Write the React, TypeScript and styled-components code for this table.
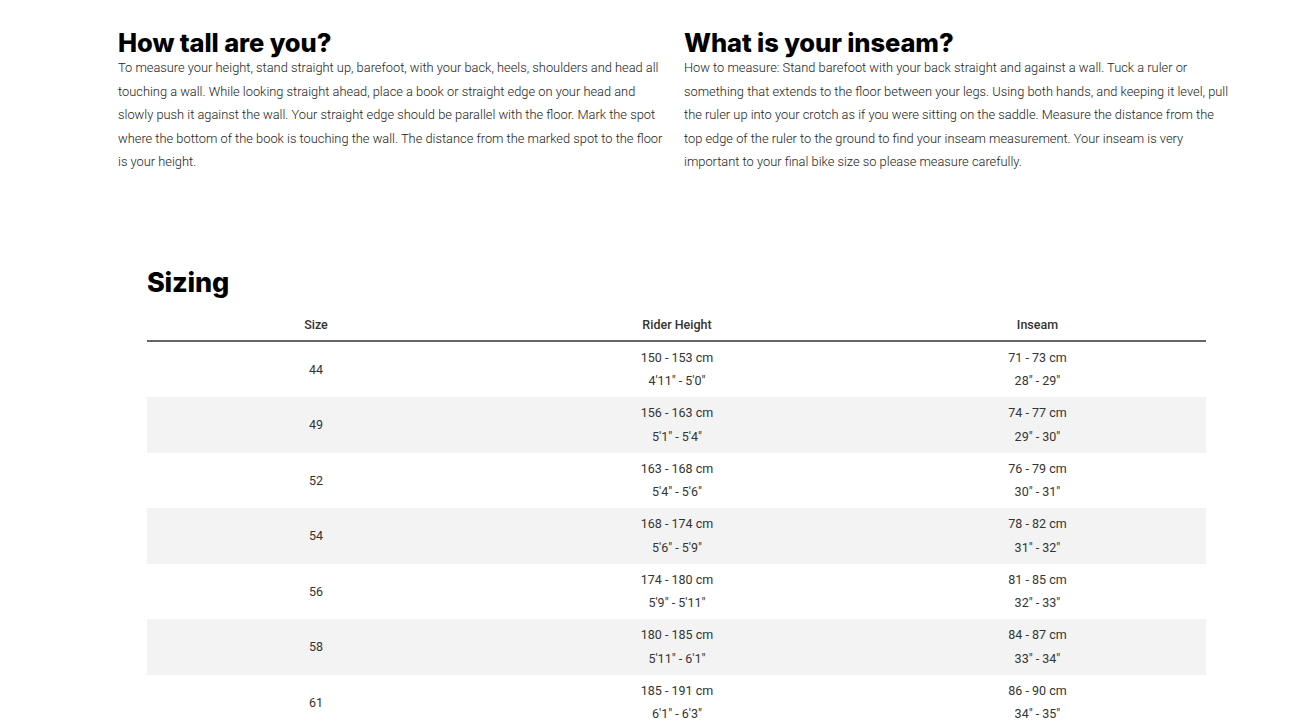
import React from "react";
import styled, { createGlobalStyle } from "styled-components";

const Global = createGlobalStyle`
  html, body { margin: 0; padding: 0; background: #fff; }
  body { font-family: Roboto, "Liberation Sans", sans-serif; color: #333; }
`;

const Page = styled.div`
  width: 1306px;
  overflow: hidden;
  height: 728px;
`;

const Intro = styled.section`
  display: grid;
  grid-template-columns: 547px 547px;
  column-gap: 19px;
  padding: 29px 0 0 118px;
`;

const Column = styled.div`
  display: flex;
  flex-direction: column;
`;

const Heading = styled.h2`
  margin: 0;
  font-family: Inter, "Liberation Sans", sans-serif;
  font-weight: 800;
  font-size: 25.5px;
  line-height: 27px;
  letter-spacing: -0.1px;
  color: #000;
`;

const Para = styled.p`
  margin: 0;
  font-family: Roboto, "Liberation Sans", sans-serif;
  font-weight: 300;
  font-size: 12.85px;
  line-height: 23.5px;
  color: #222;
`;

const Sizing = styled.section`
  padding: 93px 0 0 147px;
  width: 1059px;
`;

const SizingTitle = styled.h2`
  margin: 0 0 13px 0;
  font-family: Inter, "Liberation Sans", sans-serif;
  font-weight: 800;
  font-size: 27px;
  line-height: 32px;
  letter-spacing: -0.2px;
  color: #000;
`;

const Table = styled.table`
  width: 1059px;
  border-collapse: collapse;
  table-layout: fixed;
`;

const Th = styled.th`
  font-family: Roboto, "Liberation Sans", sans-serif;
  font-weight: 500;
  font-size: 12.5px;
  color: #333;
  text-align: center;
  padding: 5px 0 8px;
  border-bottom: 2px solid #666;
`;

const Row = styled.tr<{ $alt: boolean }>`
  background: ${(p) => (p.$alt ? "#f3f3f3" : "#fff")};
`;

const Td = styled.td`
  font-family: Roboto, "Liberation Sans", sans-serif;
  font-weight: 400;
  font-size: 12.5px;
  line-height: 23.5px;
  color: #333;
  text-align: center;
  vertical-align: middle;
  height: 55.5px;
  padding: 0;
`;

const Line = styled.div``;

const rows = [
  ["44", "150 - 153 cm", "4'11\" - 5'0\"", "71 - 73 cm", "28\" - 29\""],
  ["49", "156 - 163 cm", "5'1\" - 5'4\"", "74 - 77 cm", "29\" - 30\""],
  ["52", "163 - 168 cm", "5'4\" - 5'6\"", "76 - 79 cm", "30\" - 31\""],
  ["54", "168 - 174 cm", "5'6\" - 5'9\"", "78 - 82 cm", "31\" - 32\""],
  ["56", "174 - 180 cm", "5'9\" - 5'11\"", "81 - 85 cm", "32\" - 33\""],
  ["58", "180 - 185 cm", "5'11\" - 6'1\"", "84 - 87 cm", "33\" - 34\""],
  ["61", "185 - 191 cm", "6'1\" - 6'3\"", "86 - 90 cm", "34\" - 35\""],
];

export default function App() {
  return (
    <Page>
      <Global />
      <Intro>
        <Column>
          <Heading>How tall are you?</Heading>
          <Para>
            To measure your height, stand straight up, barefoot, with your back, heels, shoulders and head all
            touching a wall. While looking straight ahead, place a book or straight edge on your head and
            slowly push it against the wall. Your straight edge should be parallel with the floor. Mark the spot
            where the bottom of the book is touching the wall. The distance from the marked spot to the floor
            is your height.
          </Para>
        </Column>
        <Column>
          <Heading>What is your inseam?</Heading>
          <Para>
            How to measure: Stand barefoot with your back straight and against a wall. Tuck a ruler or
            something that extends to the floor between your legs. Using both hands, and keeping it level, pull
            the ruler up into your crotch as if you were sitting on the saddle. Measure the distance from the
            top edge of the ruler to the ground to find your inseam measurement. Your inseam is very
            important to your final bike size so please measure carefully.
          </Para>
        </Column>
      </Intro>
      <Sizing>
        <SizingTitle>Sizing</SizingTitle>
        <Table>
          <colgroup>
            <col style={{ width: 338 }} />
            <col style={{ width: 384 }} />
            <col style={{ width: 337 }} />
          </colgroup>
          <thead>
            <tr>
              <Th>Size</Th>
              <Th>Rider Height</Th>
              <Th>Inseam</Th>
            </tr>
          </thead>
          <tbody>
            {rows.map((r, i) => (
              <Row key={r[0]} $alt={i % 2 === 1}>
                <Td>{r[0]}</Td>
                <Td>
                  <Line>{r[1]}</Line>
                  <Line>{r[2]}</Line>
                </Td>
                <Td>
                  <Line>{r[3]}</Line>
                  <Line>{r[4]}</Line>
                </Td>
              </Row>
            ))}
          </tbody>
        </Table>
      </Sizing>
    </Page>
  );
}
